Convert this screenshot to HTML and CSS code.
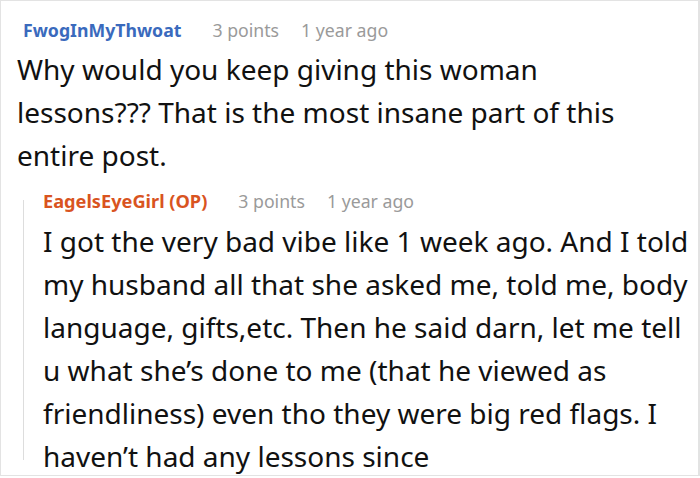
FILE: index.html
```html
<!DOCTYPE html>
<html>
<head>
<meta charset="utf-8">
<link rel="stylesheet" href="styles.css">
</head>
<body>
<div class="frame">
  <div class="comment">
    <div class="meta">
      <span class="author blue">FwogInMyThwoat</span>
      <span class="stat">3 points</span>
      <span class="stat">1 year ago</span>
    </div>
    <p class="text top-text">Why would you keep giving this woman lessons??? That is the most insane part of this entire post.</p>
  </div>
  <div class="reply">
    <div class="meta">
      <span class="author orange">EagelsEyeGirl (OP)</span>
      <span class="stat">3 points</span>
      <span class="stat">1 year ago</span>
    </div>
    <p class="text">I got the very bad vibe like 1 week ago. And I told my husband all that she asked me, told me, body language, gifts,etc. Then he said darn, let me tell u what she’s done to me (that he viewed as friendliness) even tho they were big red flags. I haven’t had any lessons since</p>
  </div>
</div>
</body>
</html>
```
FILE: styles.css
```css
html, body {
  margin: 0;
  padding: 0;
  background: #ffffff;
}
body {
  font-family: "Noto Sans", "Open Sans", sans-serif;
  width: 700px;
  height: 478px;
  overflow: hidden;
}
.frame {
  box-sizing: border-box;
  width: 700px;
  height: 476px;
  border: 1px solid #e3e3e3;
  border-right-width: 2px;
  overflow: hidden;
  padding: 14px 0 0 16px;
}
.meta {
  display: flex;
  gap: 22px;
  font-size: 17.7px;
  line-height: 30px;
  padding-left: 6px;
}
.author {
  font-weight: 700;
  margin-right: 9px;
}
.blue { color: #3a6abd; }
.orange { color: #d9541f; }
.stat { color: #9a9a9a; }
.text {
  margin: 0;
  font-size: 28px;
  line-height: 43px;
  color: #111111;
}
.top-text {
  width: 630px;
  margin-top: 3px;
}
.reply {
  position: relative;
  margin: 9px 0 0 6px;
  padding-left: 20px;
}
.reply::before {
  content: "";
  position: absolute;
  left: 0;
  top: 14px;
  bottom: 18px;
  width: 1px;
  background: #dddddd;
}
.reply .meta {
  padding-left: 0;
  margin-bottom: 4px;
}
.reply .author {
  font-size: 18.2px;
}
.reply .text {
  width: 650px;
}
```
